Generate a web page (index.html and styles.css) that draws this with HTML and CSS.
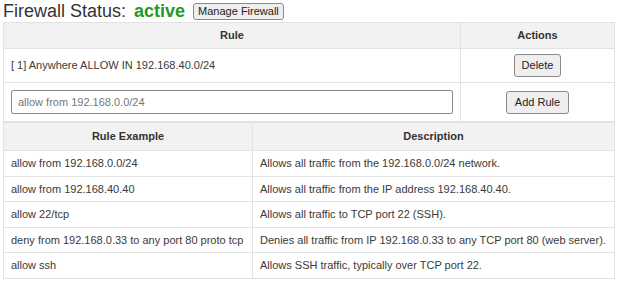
FILE: index.html
```html
<!DOCTYPE html>
<html lang="en">
<head>
  <meta charset="UTF-8">
  <title>Firewall Status</title>
  <link rel="stylesheet" href="styles.css">
</head>
<body>
  <div class="status">
    <span class="status-label">Firewall Status:</span>
    <span class="status-value">active</span>
    <button class="btn btn-small">Manage Firewall</button>
  </div>

  <table class="rules">
    <thead>
      <tr>
        <th class="col-rule">Rule</th>
        <th class="col-actions">Actions</th>
      </tr>
    </thead>
    <tbody>
      <tr class="rule-row">
        <td>[ 1] Anywhere ALLOW IN 192.168.40.0/24</td>
        <td class="center"><button class="btn">Delete</button></td>
      </tr>
      <tr class="add-row">
        <td><input type="text" class="rule-input" placeholder="allow from 192.168.0.0/24"></td>
        <td class="center"><button class="btn btn-add">Add Rule</button></td>
      </tr>
    </tbody>
  </table>

  <table class="examples">
    <thead>
      <tr>
        <th class="col-example">Rule Example</th>
        <th>Description</th>
      </tr>
    </thead>
    <tbody>
      <tr>
        <td>allow from 192.168.0.0/24</td>
        <td>Allows all traffic from the 192.168.0.0/24 network.</td>
      </tr>
      <tr>
        <td>allow from 192.168.40.40</td>
        <td>Allows all traffic from the IP address 192.168.40.40.</td>
      </tr>
      <tr>
        <td>allow 22/tcp</td>
        <td>Allows all traffic to TCP port 22 (SSH).</td>
      </tr>
      <tr>
        <td>deny from 192.168.0.33 to any port 80 proto tcp</td>
        <td>Denies all traffic from IP 192.168.0.33 to any TCP port 80 (web server).</td>
      </tr>
      <tr>
        <td>allow ssh</td>
        <td>Allows SSH traffic, typically over TCP port 22.</td>
      </tr>
    </tbody>
  </table>
</body>
</html>
```

FILE: styles.css
```css
body {
  font-family: 'Liberation Sans', Arial, sans-serif;
  font-size: 11px;
  color: #3a3a3a;
  background: #fff;
  margin: 0;
  padding: 0 3px;
  width: 612px;
}
.status {
  display: flex;
  align-items: center;
  height: 22px;
}
.status-label {
  font-size: 18px;
  color: #333;
}
.status-value {
  font-size: 18px;
  font-weight: bold;
  color: #239a23;
  margin-left: 8px;
  margin-right: 8px;
}
.btn {
  font-family: 'Liberation Sans', Arial, sans-serif;
  font-size: 11px;
  color: #222;
  background: #efefef;
  border: 1px solid #8a8a8a;
  border-radius: 3px;
  padding: 4px 7px;
  line-height: 13px;
}
.btn-small {
  padding: 1px 4px;
}
.btn-add {
  padding: 4px 8px;
}
table {
  width: 100%;
  border-collapse: collapse;
  table-layout: fixed;
}
th, td {
  border: 1px solid #e2e2e2;
  padding: 6px 7px;
  line-height: 13px;
  text-align: left;
}
th {
  background: #f2f2f2;
  font-weight: bold;
  text-align: center;
  color: #333;
}
.col-actions {
  width: 139px;
}
.center {
  text-align: center;
}
.rule-row td {
  padding-top: 5px;
  padding-bottom: 5px;
  height: 22px;
}
.add-row td {
  padding-top: 7px;
  padding-bottom: 7px;
}
.rule-input {
  display: block;
  width: 100%;
  box-sizing: border-box;
  height: 24px;
  font-family: 'Liberation Sans', Arial, sans-serif;
  font-size: 11px;
  padding: 0 6px;
  border: 1px solid #8a8a8a;
  border-radius: 2px;
}
.rule-input::placeholder {
  color: #777;
}
.examples th {
  padding-top: 7px;
  padding-bottom: 7px;
}
.examples td {
  padding-top: 6px;
  padding-bottom: 5.5px;
}
.col-example {
  width: 234px;
}
```
